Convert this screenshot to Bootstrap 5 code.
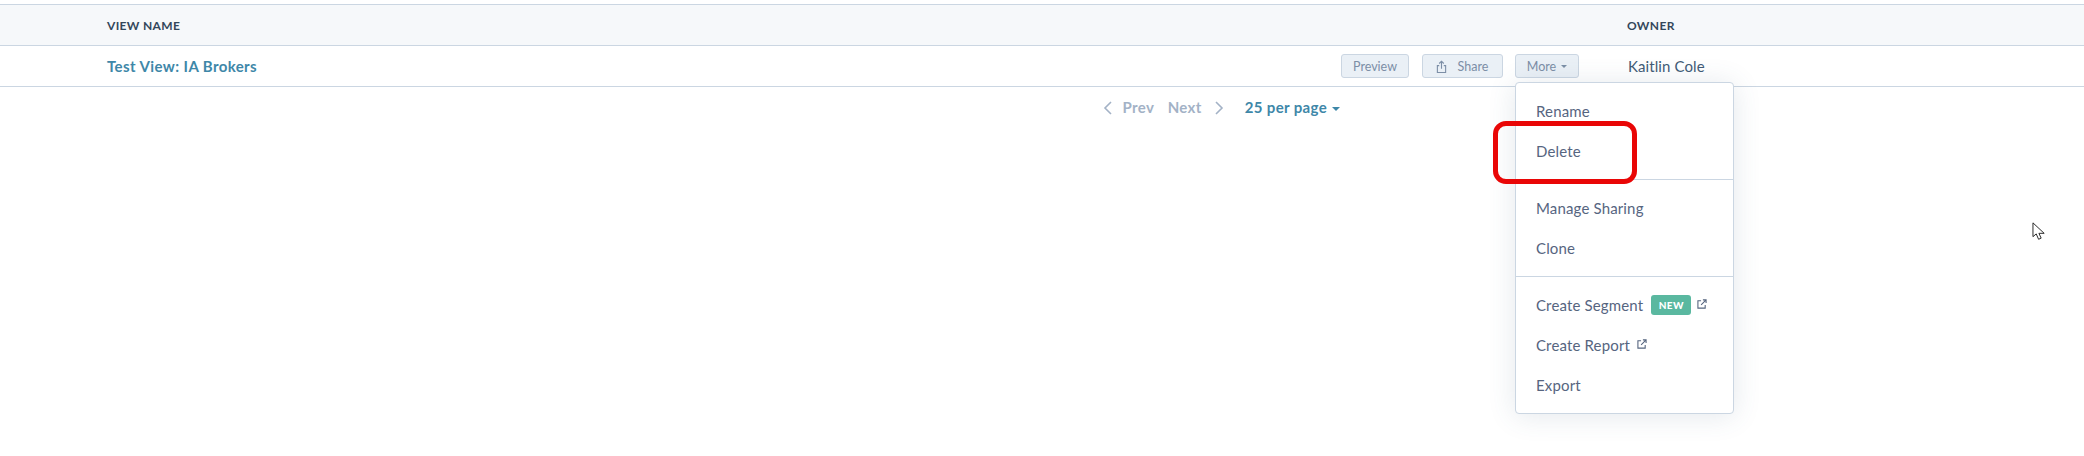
<!DOCTYPE html>
<html lang="en">
<head>
<meta charset="utf-8">
<title>Views</title>
<link href="https://cdn.jsdelivr.net/npm/bootstrap@5.3.0/dist/css/bootstrap.min.css" rel="stylesheet">
<style>
body{font-family:"Lato","Liberation Sans",sans-serif;background:#fff;color:#33475b;height:456px;overflow:hidden;padding-top:4px;position:relative}
.grid-head,.grid-row{display:flex;align-items:center;border-bottom:1px solid #cbd6e2;height:41px;padding-left:107px}
.grid-head{background:#f6f8fa;border-top:1px solid #cbd6e2;height:42px;padding-top:1px;font-size:12px;font-weight:700;letter-spacing:.35px;color:#33475b}
.cell-name{flex:0 0 1521px;display:flex;align-items:center;justify-content:space-between;padding-right:49px}
.owner-head{margin-left:-1px}
.view-link{color:#3e87a8;font-weight:700;font-size:15px;text-decoration:none;letter-spacing:.4px}
.owner-name{font-size:15px;color:#425b76;letter-spacing:.1px}
.act-btn{background:#eaf0f6;border:1px solid #cbd6e2;color:#7c8ea6;font-size:12.5px;height:24px;padding:1px 12px 0;line-height:22px;border-radius:3px;display:inline-flex;align-items:center;justify-content:center;--bs-btn-hover-bg:#eaf0f6}
.btn-preview{width:68px}
.btn-share{width:81px}
.btn-more{width:64px}
.share-glyph{margin-right:11px}
.act-btn.dropdown-toggle::after{border-top-color:#7c8ea6;border-width:3.5px 3.5px 0;margin-left:5px;vertical-align:middle}
.act-set{gap:12.5px}
.view-menu{display:block;top:28px;left:0;width:219px;height:332px;margin:0;padding:8px 0 0;border:1px solid #cbd6e2;border-radius:4px;box-shadow:0 2px 28px rgba(66,91,118,.14)}
.view-menu .dropdown-item{height:40px;display:flex;align-items:center;padding:0 20px;color:#56657f;font-size:15px;letter-spacing:.15px}
.view-menu .dropdown-divider{margin:8px 0;opacity:1;border-top:1px solid #cbd6e2}
.new-tag{background:#5ab8a0;color:#fff;font-size:10px;font-weight:900;letter-spacing:.4px;border-radius:3px;width:40px;height:20px;display:inline-flex;align-items:center;justify-content:center;margin:0 6px 0 8px}
.ext-icon{width:10px;height:10px;margin:-2px 0 0 7px;color:#56657f}
.ext-after-tag{margin-left:0}
.pager{padding-left:1103px;height:41px;font-size:15px;font-weight:700;color:#a3b2c6;letter-spacing:.35px}
.pager-prev{margin-left:10.5px}
.pager-next{margin-left:13.5px}
.pager-chevron{margin-left:13px}
.pager-count{color:#3e87a8;margin-left:21px;text-decoration:none}
.pager-count::after{border-top-color:#3e87a8;border-width:4px 4px 0;margin-left:5px;vertical-align:middle}
.red-mark{position:absolute;left:1493px;top:121px;width:144px;height:63px;border:5px solid #e90606;border-radius:13px;pointer-events:none;z-index:2000}
.cursor-mark{position:absolute;left:2032px;top:222px;width:14px;height:19px}
</style>
</head>
<body>
<div class="grid-head">
  <div class="cell-name">VIEW NAME</div>
  <div class="owner-head">OWNER</div>
</div>
<div class="grid-row">
  <div class="cell-name">
    <a class="view-link" href="#">Test View: IA Brokers</a>
    <div class="d-flex act-set">
      <button class="btn act-btn btn-preview" type="button">Preview</button>
      <button class="btn act-btn btn-share" type="button">
        <svg class="share-glyph" width="11" height="14" viewBox="0 0 12 14" fill="none" stroke="currentColor" stroke-width="1.2"><path d="M3.5 5.5H1.5v7.5h9V5.5H8.5"/><path d="M6 9V1M3.5 3.2 6 .8l2.5 2.4"/></svg>
        Share
      </button>
      <div class="dropdown d-flex">
        <button class="btn act-btn btn-more dropdown-toggle" type="button">More</button>
        <div class="dropdown-menu view-menu">
          <a class="dropdown-item" href="#">Rename</a>
          <a class="dropdown-item" href="#">Delete</a>
          <hr class="dropdown-divider">
          <a class="dropdown-item" href="#">Manage Sharing</a>
          <a class="dropdown-item" href="#">Clone</a>
          <hr class="dropdown-divider">
          <a class="dropdown-item" href="#">Create Segment<span class="new-tag">NEW</span><svg class="ext-icon ext-after-tag" viewBox="0 0 11 11" fill="none" stroke="currentColor" stroke-width="1.2"><path d="M4.5 2H1v8h8V6.5M6.5 1H10v3.5M10 1 4.5 6.5"/></svg></a>
          <a class="dropdown-item" href="#">Create Report<svg class="ext-icon" viewBox="0 0 11 11" fill="none" stroke="currentColor" stroke-width="1.2"><path d="M4.5 2H1v8h8V6.5M6.5 1H10v3.5M10 1 4.5 6.5"/></svg></a>
          <a class="dropdown-item" href="#">Export</a>
        </div>
      </div>
    </div>
  </div>
  <div class="owner-name">Kaitlin Cole</div>
</div>
<div class="d-flex align-items-center pager">
  <svg width="9" height="14" viewBox="0 0 9 14" fill="none" stroke="currentColor" stroke-width="1.6"><path d="M8 1 2 7l6 6"/></svg>
  <span class="pager-prev">Prev</span>
  <span class="pager-next">Next</span>
  <svg class="pager-chevron" width="9" height="14" viewBox="0 0 9 14" fill="none" stroke="currentColor" stroke-width="1.6"><path d="M1 1l6 6-6 6"/></svg>
  <a class="pager-count dropdown-toggle" href="#">25 per page</a>
</div>
<div class="red-mark"></div>
<svg class="cursor-mark" viewBox="0 0 16 22" fill="#fff" stroke="#222" stroke-width="1.1"><path d="M1 1v16l3.8-3.2L7.5 20l3-1.3-2.6-5.6H14z"/></svg>
<script src="https://cdn.jsdelivr.net/npm/bootstrap@5.3.0/dist/js/bootstrap.bundle.min.js"></script>
</body>
</html>
